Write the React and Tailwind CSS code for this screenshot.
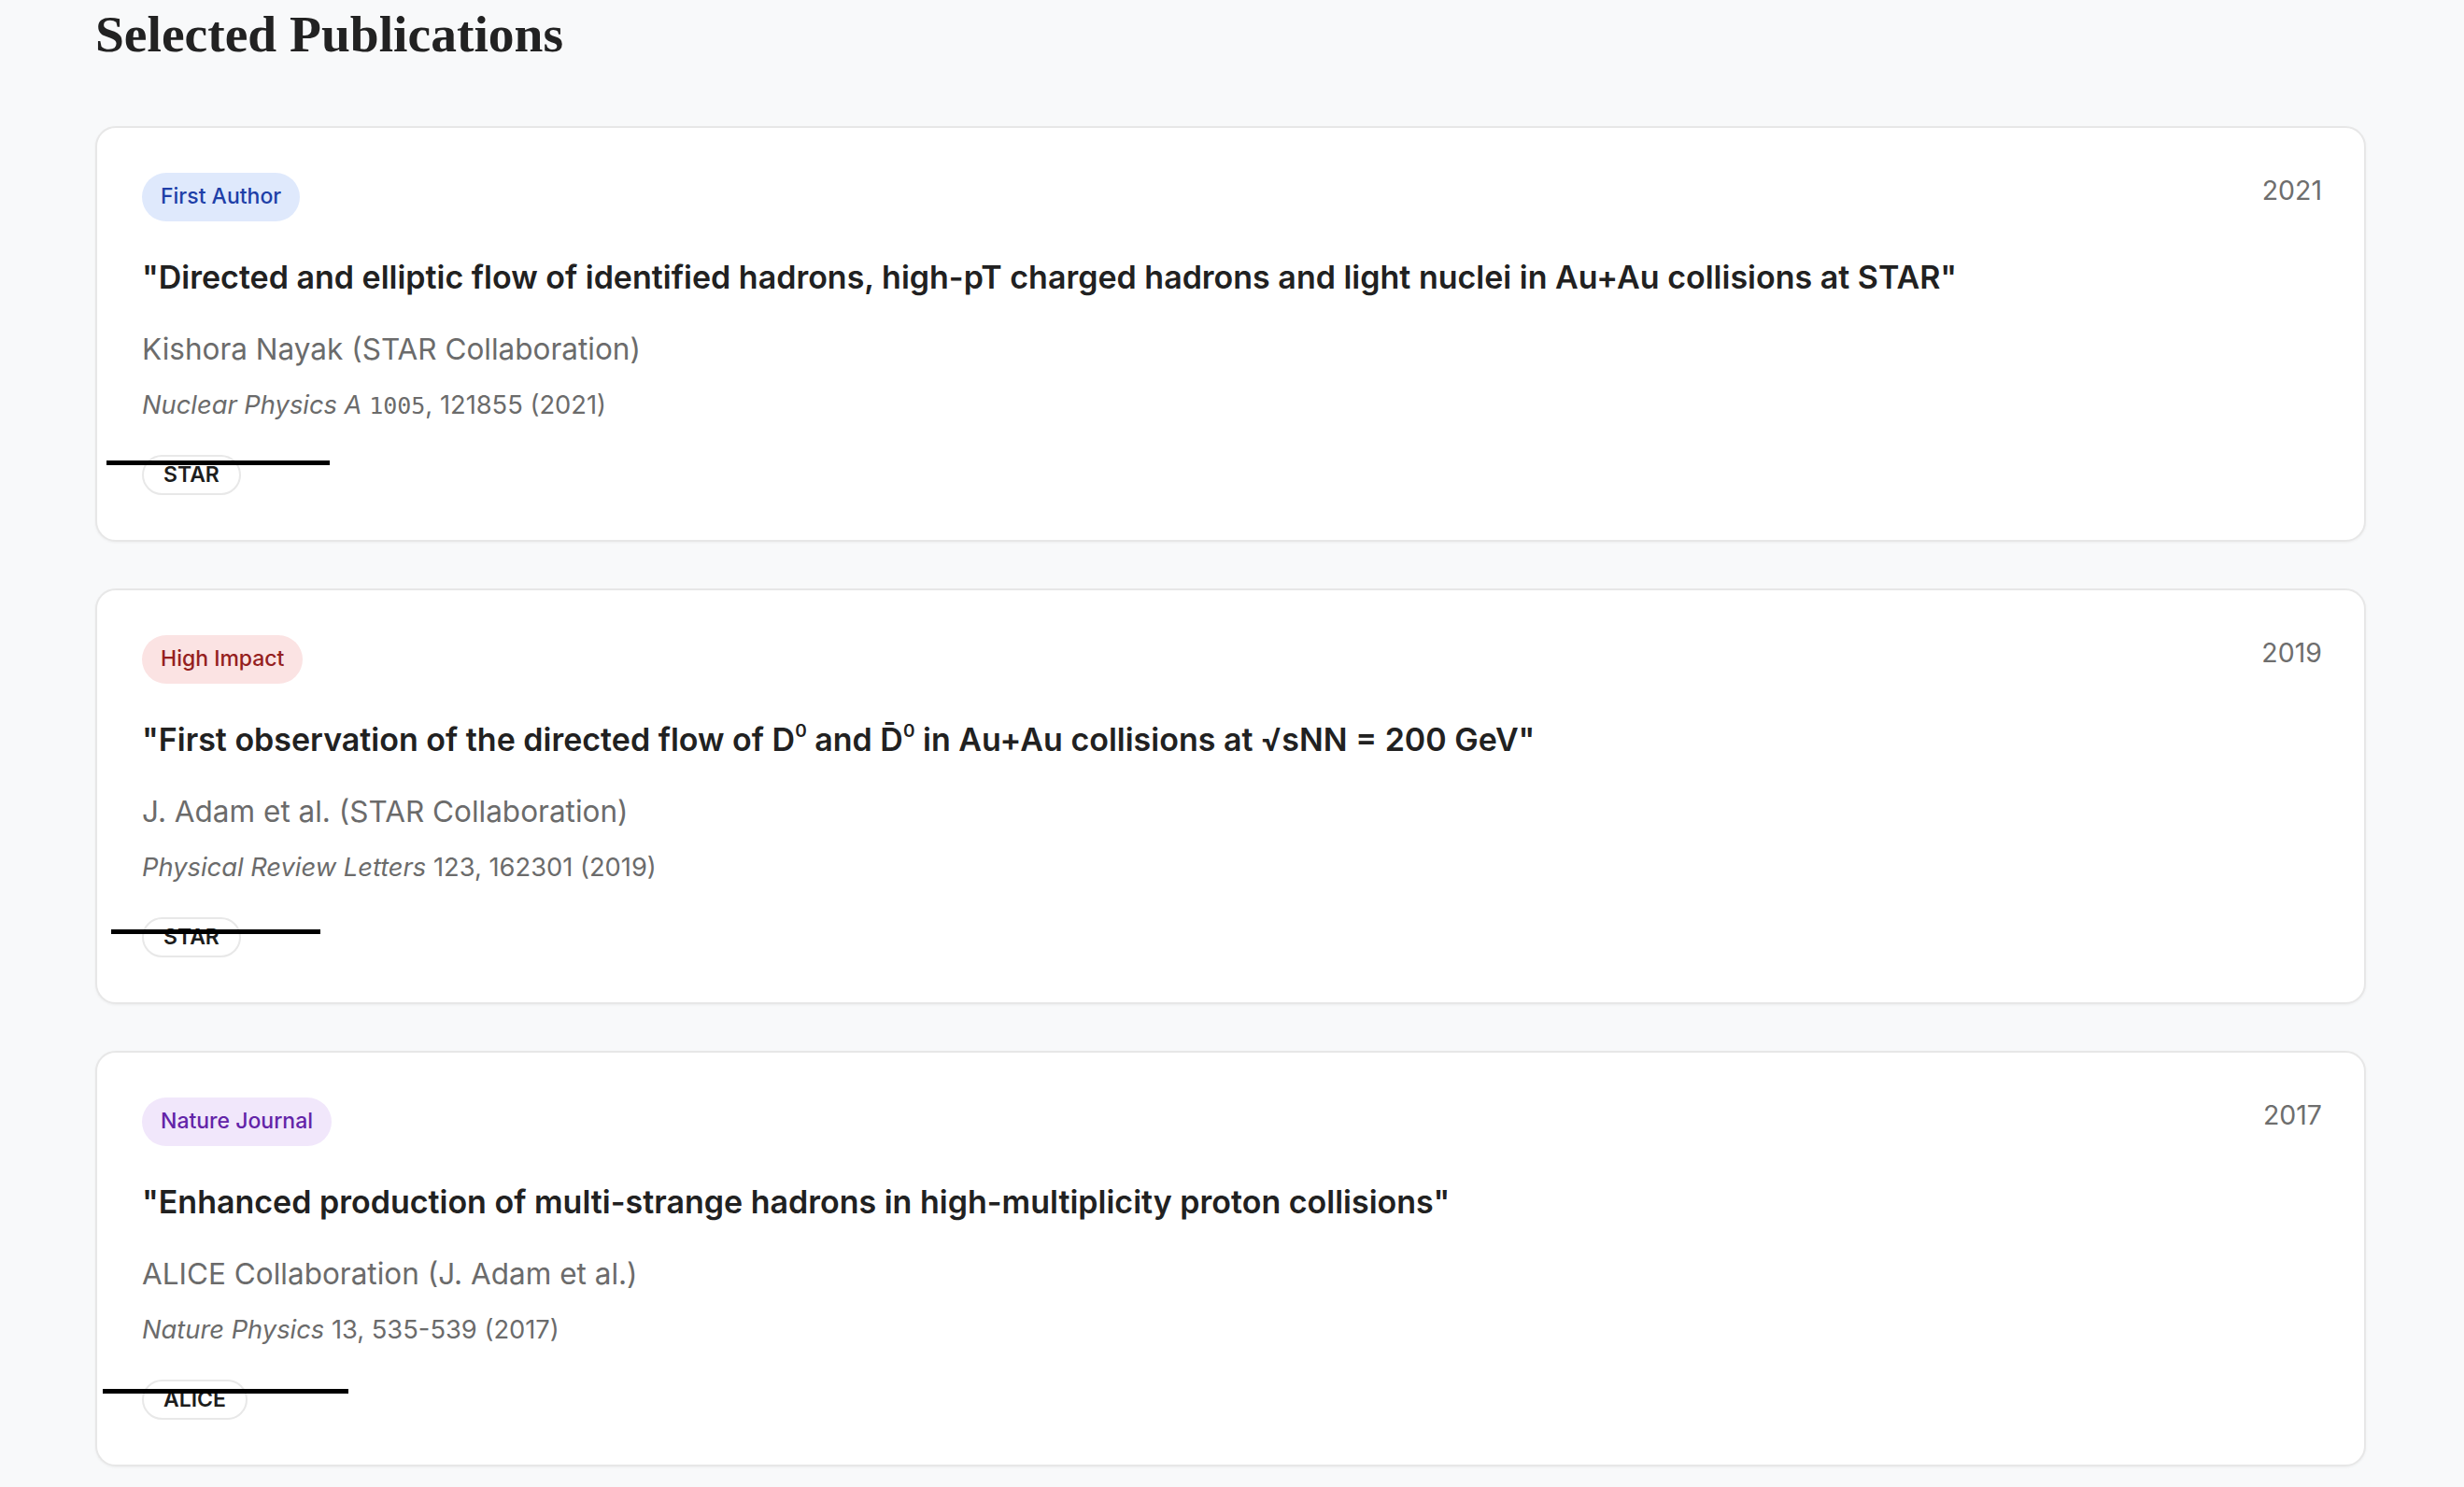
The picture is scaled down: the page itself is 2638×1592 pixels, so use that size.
import React from "react";

const publications = [
  {
    badge: "First Author",
    badgeClass: "bg-[#dfe9fc] text-[#1e3fa8]",
    year: "2021",
    title: (
      <>
        "Directed and elliptic flow of identified hadrons, high-pT charged hadrons and light nuclei in Au+Au collisions at STAR"
      </>
    ),
    authors: "Kishora Nayak (STAR Collaboration)",
    journal: "Nuclear Physics A",
    details: (
      <>
        {" "}
        <span className="font-['DejaVu_Sans_Mono',monospace] text-[25px] leading-none">1005</span>, 121855 (2021)
      </>
    ),
    tag: "STAR",
    line: "left-[10px] top-[356px] w-[239px]",
  },
  {
    badge: "High Impact",
    badgeClass: "bg-[#fbe3e3] text-[#952020]",
    year: "2019",
    title: (
      <>
        "First observation of the directed flow of D<sup className="text-[19px] -top-[0.75em]">0</sup> and D̄<sup className="text-[19px] -top-[0.75em]">0</sup> in Au+Au collisions at <span className="leading-none">√</span>sNN = 200 GeV"
      </>
    ),
    authors: "J. Adam et al. (STAR Collaboration)",
    journal: "Physical Review Letters",
    details: " 123, 162301 (2019)",
    tag: "STAR",
    line: "left-[15px] top-[363px] w-[224px]",
  },
  {
    badge: "Nature Journal",
    badgeClass: "bg-[#f1e7fb] text-[#6324a8]",
    year: "2017",
    title: (
      <>
        "Enhanced production of multi-strange hadrons in high-multiplicity proton collisions"
      </>
    ),
    authors: "ALICE Collaboration (J. Adam et al.)",
    journal: "Nature Physics",
    details: " 13, 535-539 (2017)",
    tag: "ALICE",
    line: "left-[6px] top-[360px] w-[263px]",
  },
];

function PublicationCard({ pub }) {
  return (
    <div className="relative bg-white border-2 border-[#e7e7e7] rounded-[22px] p-[48px] shadow-[0_1px_3px_rgba(0,0,0,0.05)]">
      <div className="flex justify-between items-start">
        <span
          className={`inline-flex items-center h-[52px] px-[20px] rounded-full text-[23px] font-medium ${pub.badgeClass}`}
        >
          {pub.badge}
        </span>
        <span className="text-[28.5px] leading-[1.5] text-[#6e6e6e] -mt-[2px] -mr-[3px]">
          {pub.year}
        </span>
      </div>
      <h3 className="mt-[34px] text-[34px] leading-[51px] font-semibold text-[#212121]">
        {pub.title}
      </h3>
      <p className="mt-[29px] text-[31.5px] leading-[45px] text-[#6b6b6b]">
        {pub.authors}
      </p>
      <p className="mt-[17px] text-[27.3px] leading-[42px] text-[#6b6b6b]">
        <em>{pub.journal}</em>
        {pub.details}
      </p>
      <div className="mt-[32px] flex">
        <span className="inline-flex items-center h-[43px] px-[21px] rounded-full border-2 border-[#e8e8e8] text-[23px] font-semibold text-[#1d1d1d]">
          {pub.tag}
        </span>
      </div>
      <div className={`absolute h-[5px] bg-black ${pub.line}`} />
    </div>
  );
}

export default function App() {
  return (
    <div className="min-h-screen bg-[#f8f9fa] font-['Inter',sans-serif] pl-[102px] pr-[105px] pt-[9px] pb-[40px]">
      <h2 className="font-['Liberation_Serif',serif] font-bold text-[55.5px] leading-none text-[#222222]">
        Selected Publications
      </h2>
      <div className="mt-[70px] flex flex-col gap-[50px]">
        {publications.map((pub) => (
          <PublicationCard key={pub.year} pub={pub} />
        ))}
      </div>
    </div>
  );
}
